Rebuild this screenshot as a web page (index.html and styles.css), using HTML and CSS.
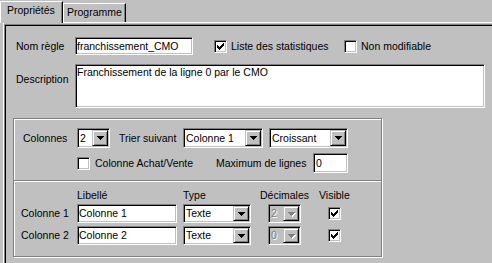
FILE: index.html
```html
<!DOCTYPE html>
<html lang="fr">
<head>
<meta charset="utf-8">
<title>Propriétés</title>
<link rel="stylesheet" href="styles.css">
</head>
<body>
<div class="tabstrip">
  <div class="tab active">Propriétés</div>
  <div class="tab">Programme</div>
</div>
<div class="tabbody">
  <div class="panel">
    <div class="row row-nom">
      <span class="lbl lbl-main">Nom règle</span>
      <div class="edit w-nom">franchissement_CMO</div>
      <div class="check-item ck-stats">
        <span class="cb"><svg width="7" height="7" viewBox="0 0 7 7" shape-rendering="crispEdges"><path d="M6 0h1v1h-1z M5 1h2v1h-2z M0 2h1v1h-1z M4 2h3v1h-3z M0 3h2v1h-2z M3 3h3v1h-3z M0 4h5v1h-5z M1 5h3v1h-3z M2 6h1v1h-1z" fill="#000"/></svg></span>
        <span>Liste des statistiques</span>
      </div>
      <div class="check-item">
        <span class="cb"></span>
        <span>Non modifiable</span>
      </div>
    </div>
    <div class="row row-desc">
      <span class="lbl lbl-main lbl-top">Description</span>
      <div class="edit memo">Franchissement de la ligne 0 par le CMO</div>
    </div>
    <div class="group">
      <div class="sect1">
        <div class="g1r1">
          <span class="lbl lbl-col">Colonnes</span>
          <div class="combo w33"><span class="val">2</span><span class="btn"><svg width="7" height="4" viewBox="0 0 7 4" shape-rendering="crispEdges"><path d="M0 0h7v1h-1v1h-1v1h-1v1h-1v-1h-1v-1h-1v-1h-1z" fill="#000"/></svg></span></div>
          <span class="lbl lbl-trier">Trier suivant</span>
          <div class="combo w80"><span class="val">Colonne 1</span><span class="btn"><svg width="7" height="4" viewBox="0 0 7 4" shape-rendering="crispEdges"><path d="M0 0h7v1h-1v1h-1v1h-1v1h-1v-1h-1v-1h-1v-1h-1z" fill="#000"/></svg></span></div>
          <div class="combo w79 ml6"><span class="val">Croissant</span><span class="btn"><svg width="7" height="4" viewBox="0 0 7 4" shape-rendering="crispEdges"><path d="M0 0h7v1h-1v1h-1v1h-1v1h-1v-1h-1v-1h-1v-1h-1z" fill="#000"/></svg></span></div>
        </div>
        <div class="g1r2">
          <div class="check-item ck-achat">
            <span class="cb"></span>
            <span>Colonne Achat/Vente</span>
          </div>
          <span class="lbl lbl-max">Maximum de lignes</span>
          <div class="edit w35 pl2">0</div>
        </div>
      </div>
      <div class="sep"></div>
      <div class="grid">
        <span></span>
        <span class="hdr">Libellé</span>
        <span class="hdr">Type</span>
        <span class="hdr">Décimales</span>
        <span class="hdr">Visible</span>

        <div class="cell">Colonne 1</div>
        <div class="cell"><div class="edit w100">Colonne 1</div></div>
        <div class="cell"><div class="combo w68"><span class="val">Texte</span><span class="btn"><svg width="7" height="4" viewBox="0 0 7 4" shape-rendering="crispEdges"><path d="M0 0h7v1h-1v1h-1v1h-1v1h-1v-1h-1v-1h-1v-1h-1z" fill="#000"/></svg></span></div></div>
        <div class="cell"><div class="combo w33 ml8 dis"><span class="val">2</span><span class="btn"><svg width="8" height="5" viewBox="0 0 8 5" shape-rendering="crispEdges"><path transform="translate(1 1)" d="M0 0h7v1h-1v1h-1v1h-1v1h-1v-1h-1v-1h-1v-1h-1z" fill="#fff"/><path d="M0 0h7v1h-1v1h-1v1h-1v1h-1v-1h-1v-1h-1v-1h-1z" fill="#808080"/></svg></span></div></div>
        <div class="cell"><span class="cb ml9"><svg width="7" height="7" viewBox="0 0 7 7" shape-rendering="crispEdges"><path d="M6 0h1v1h-1z M5 1h2v1h-2z M0 2h1v1h-1z M4 2h3v1h-3z M0 3h2v1h-2z M3 3h3v1h-3z M0 4h5v1h-5z M1 5h3v1h-3z M2 6h1v1h-1z" fill="#000"/></svg></span></div>

        <div class="cell">Colonne 2</div>
        <div class="cell"><div class="edit w100">Colonne 2</div></div>
        <div class="cell"><div class="combo w68"><span class="val">Texte</span><span class="btn"><svg width="7" height="4" viewBox="0 0 7 4" shape-rendering="crispEdges"><path d="M0 0h7v1h-1v1h-1v1h-1v1h-1v-1h-1v-1h-1v-1h-1z" fill="#000"/></svg></span></div></div>
        <div class="cell"><div class="combo w33 ml8 dis"><span class="val">0</span><span class="btn"><svg width="8" height="5" viewBox="0 0 8 5" shape-rendering="crispEdges"><path transform="translate(1 1)" d="M0 0h7v1h-1v1h-1v1h-1v1h-1v-1h-1v-1h-1v-1h-1z" fill="#fff"/><path d="M0 0h7v1h-1v1h-1v1h-1v1h-1v-1h-1v-1h-1v-1h-1z" fill="#808080"/></svg></span></div></div>
        <div class="cell"><span class="cb ml9"><svg width="7" height="7" viewBox="0 0 7 7" shape-rendering="crispEdges"><path d="M6 0h1v1h-1z M5 1h2v1h-2z M0 2h1v1h-1z M4 2h3v1h-3z M0 3h2v1h-2z M3 3h3v1h-3z M0 4h5v1h-5z M1 5h3v1h-3z M2 6h1v1h-1z" fill="#000"/></svg></span></div>
      </div>
    </div>
  </div>
</div>
</body>
</html>
```

FILE: styles.css
```css
* { box-sizing: border-box; }
html, body { margin: 0; padding: 0; overflow: hidden; }
body {
  width: 492px;
  height: 263px;
  background: #c0c0c0;
  color: #000;
  font-family: "Liberation Sans", Arial, sans-serif;
  font-size: 10.5px;
  line-height: 13px;
}

/* tabs */
.tabstrip {
  position: relative;
  z-index: 1;
  display: flex;
  align-items: flex-end;
  height: 22px;
}
.tab {
  width: 63px;
  height: 19px;
  padding: 2px 0 0 3px;
  border-top: 1px solid #fff;
  border-left: 1px solid #fff;
  border-right: 1px solid #000;
  box-shadow: inset -1px 0 0 #808080;
  background: #c0c0c0;
  white-space: nowrap;
}
.tab.active {
  height: 22px;
  margin-bottom: -1px;
  padding-left: 6px;
}

.tabbody {
  margin-left: 3px;
  height: 241px;
  padding-top: 1px;
  border-top: 1px solid #fff;
  border-left: 1px solid #fff;
}
.panel {
  height: 100%;
  padding: 12px 0 0 8px;
  border-top: 1px solid #808080;
  border-left: 1px solid #808080;
  box-shadow: inset 1px 1px 0 #000;
}

/* generic rows */
.row { display: flex; }
.lbl { white-space: nowrap; }
.lbl-main { width: 59px; flex: none; }
.row-nom {
  margin-left: 3px;
  height: 18px;
  align-items: center;
}
.row-desc {
  margin-left: 3px;
  margin-top: 9px;
  align-items: flex-start;
}
.lbl-top { padding-top: 9px; }

/* sunken fields */
.edit, .combo {
  flex: none;
  background: #fff;
  border: 1px solid;
  border-color: #808080 #fff #fff #808080;
  box-shadow: inset 1px 1px 0 #000, inset -1px -1px 0 #c0c0c0;
  white-space: nowrap;
}
.edit {
  display: flex;
  align-items: center;
  height: 100%;
  padding: 0 1px;
}
.pl2 { padding-left: 2px; }
.w-nom { width: 118px; }
.memo {
  display: block;
  width: 410px;
  height: 44px;
  padding: 1px;
}
.w35 { width: 35px; }
.w100 { width: 100px; }

.combo {
  display: flex;
  height: 100%;
  padding: 1px;
}
.combo .val {
  flex: 1;
  display: flex;
  align-items: center;
  padding-left: 1px;
  overflow: hidden;
}
.combo .btn {
  flex: none;
  width: 16px;
  height: 100%;
  display: flex;
  align-items: center;
  justify-content: center;
  background: #c0c0c0;
  border: 1px solid;
  border-color: #c0c0c0 #000 #000 #c0c0c0;
  box-shadow: inset 1px 1px 0 #fff, inset -1px -1px 0 #808080;
}
.combo.dis { background: #c0c0c0; }
.combo.dis .val { color: #808080; text-shadow: 1px 1px 0 #fff; }
.combo.dis .btn svg { margin: 1px 0 0 1px; }
.w33 { width: 33px; }
.w68 { width: 68px; }
.w79 { width: 79px; }
.w80 { width: 80px; }
.ml6 { margin-left: 6px; }
.ml8 { margin-left: 8px; }
.ml9 { margin-left: 9px; }

/* checkboxes */
.check-item {
  display: flex;
  align-items: center;
  gap: 4px;
  white-space: nowrap;
}
.ck-stats { margin-left: 21px; width: 130px; }
.cb {
  flex: none;
  width: 13px;
  height: 13px;
  padding: 2px;
  display: flex;
  background: #fff;
  border: 1px solid;
  border-color: #808080 #fff #fff #808080;
  box-shadow: inset 1px 1px 0 #000, inset -1px -1px 0 #c0c0c0;
}
.cb svg { display: block; }

/* group box */
.group {
  margin-top: 10px;
  width: 369px;
  height: 139px;
  border: 1px solid #808080;
  box-shadow: 1px 1px 0 #fff, inset 1px 1px 0 #fff;
}
.sect1 { padding: 9px 0 7px 9px; }
.g1r1 {
  display: flex;
  align-items: center;
  height: 20px;
}
.lbl-col { width: 54px; }
.lbl-trier { margin-left: 9px; width: 64px; }
.g1r2 {
  display: flex;
  align-items: center;
  height: 20px;
  margin-top: 5px;
  padding-left: 54px;
}
.ck-achat { width: 139px; gap: 5px; }
.lbl-max { width: 97px; }

.sep {
  height: 2px;
  border-top: 1px solid #808080;
  border-bottom: 1px solid #fff;
}

.grid {
  display: grid;
  grid-template-columns: 56px 106px 77px 59px 1fr;
  grid-template-rows: 15px 22px 19px;
  align-items: start;
  padding: 7px 0 11px 7px;
}
.hdr { white-space: nowrap; }
.cell {
  height: 19px;
  display: flex;
  align-items: center;
  white-space: nowrap;
}
```
